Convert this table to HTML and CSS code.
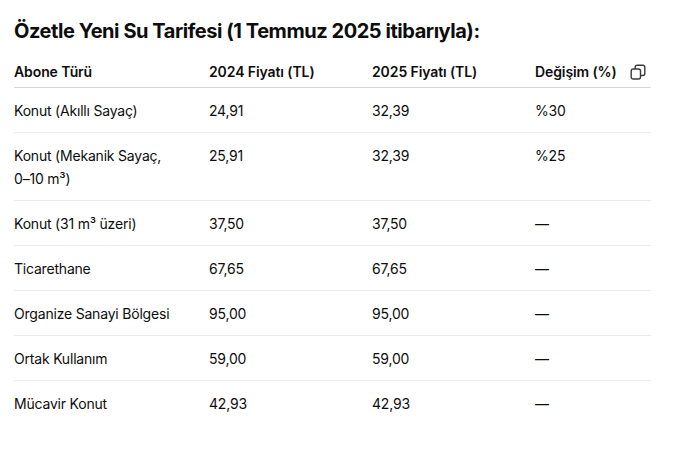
FILE: index.html
```html
<!DOCTYPE html>
<html lang="tr">
<head>
<meta charset="utf-8">
<link rel="stylesheet" href="styles.css">
</head>
<body>
<div class="page">
  <h2 class="title">Özetle Yeni Su Tarifesi (1 Temmuz 2025 itibarıyla):</h2>
  <div class="table">
    <div class="row head">
      <div class="cell">Abone Türü</div>
      <div class="cell">2024 Fiyatı (TL)</div>
      <div class="cell">2025 Fiyatı (TL)</div>
      <div class="cell last">Değişim (%)
        <svg class="copy" width="16" height="16" viewBox="0 0 16 16" fill="none" stroke="#3a3a3a" stroke-width="1.4" stroke-linejoin="round">
          <rect x="1.2" y="5" width="9.3" height="10" rx="2"/>
          <path d="M5.2 5V3.2C5.2 2 6 1.2 7.2 1.2h5.6c1.2 0 2 .8 2 2v6.3c0 1.2-.8 2-2 2h-2.3"/>
        </svg>
      </div>
    </div>
    <div class="row"><div class="cell">Konut (Akıllı Sayaç)</div><div class="cell">24,91</div><div class="cell">32,39</div><div class="cell">%30</div></div>
    <div class="row"><div class="cell">Konut (Mekanik Sayaç, <span class="nw">0–10 m³)</span></div><div class="cell">25,91</div><div class="cell">32,39</div><div class="cell">%25</div></div>
    <div class="row"><div class="cell">Konut (31 m³ üzeri)</div><div class="cell">37,50</div><div class="cell">37,50</div><div class="cell">—</div></div>
    <div class="row"><div class="cell">Ticarethane</div><div class="cell">67,65</div><div class="cell">67,65</div><div class="cell">—</div></div>
    <div class="row"><div class="cell">Organize Sanayi Bölgesi</div><div class="cell">95,00</div><div class="cell">95,00</div><div class="cell">—</div></div>
    <div class="row"><div class="cell">Ortak Kullanım</div><div class="cell">59,00</div><div class="cell">59,00</div><div class="cell">—</div></div>
    <div class="row end"><div class="cell">Mücavir Konut</div><div class="cell">42,93</div><div class="cell">42,93</div><div class="cell">—</div></div>
  </div>
</div>
</body>
</html>
```
FILE: styles.css
```css
html, body {
  margin: 0;
  padding: 0;
  background: #fff;
}
body {
  font-family: Inter, "Noto Sans", "Liberation Sans", sans-serif;
  color: #0d0d0d;
}
.page {
  padding: 17px 30px 0 14px;
}
.title {
  margin: 0 0 12px 0;
  font-size: 20px;
  line-height: 28px;
  font-weight: 700;
  letter-spacing: -0.45px;
}
.table {
  width: 637px;
}
.row {
  display: grid;
  grid-template-columns: 195px 163px 163px 116px;
  border-bottom: 1px solid #ececec;
  font-size: 14px;
  line-height: 23px;
  letter-spacing: -0.2px;
}
.row.head {
  border-bottom: 1px solid #d6d6d6;
  font-weight: 600;
  letter-spacing: -0.1px;
}
.row.end {
  border-bottom: none;
}
.cell {
  padding: 11px 18px 10px 0;
}
.head .cell {
  padding: 3px 18px 4px 0;
}
.cell.last {
  display: flex;
  align-items: center;
  justify-content: space-between;
  padding-right: 5px;
}
.nw {
  white-space: nowrap;
}
.copy {
  display: block;
}
```
